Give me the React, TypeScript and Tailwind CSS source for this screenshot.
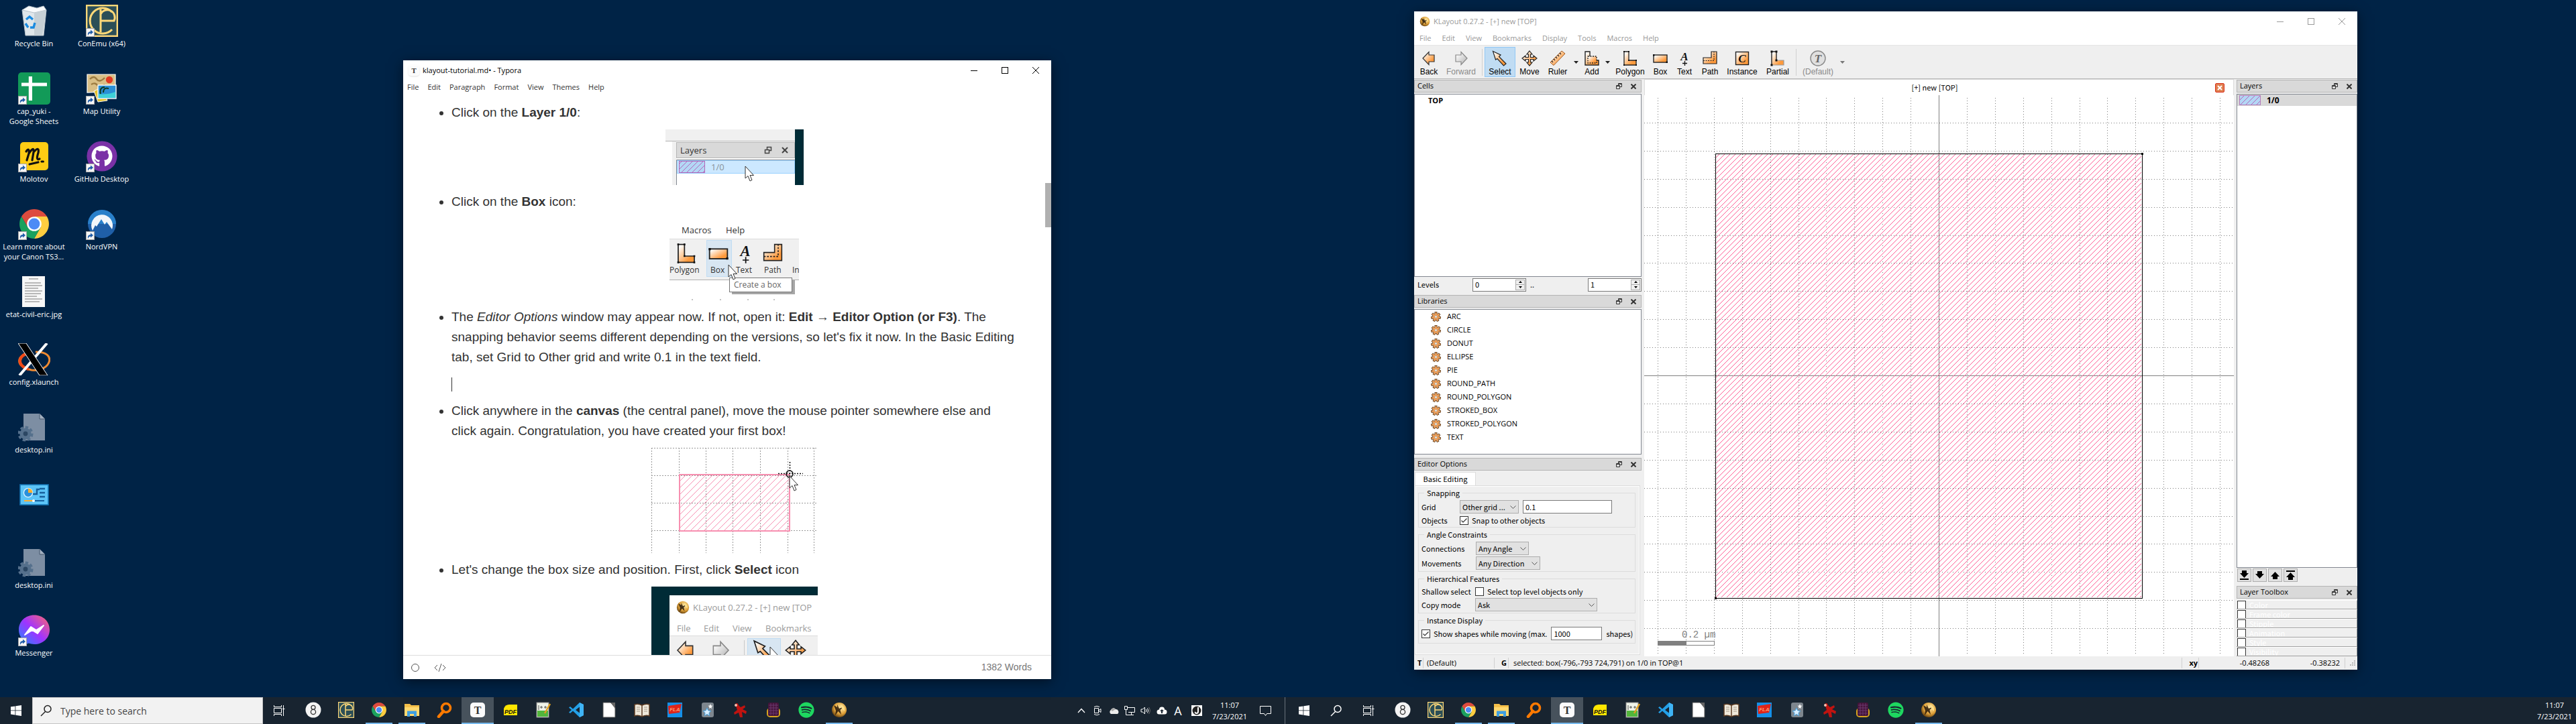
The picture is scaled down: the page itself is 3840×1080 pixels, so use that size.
import type { ReactNode } from 'react';
import { FaGithub, FaSpotify } from 'react-icons/fa';

/* ---------- shared drawing helpers ---------- */

function Glyph({ size = 24, children, className = '' }: { size?: number; children: ReactNode; className?: string }) {
  return (
    <svg width={size} height={size} viewBox="0 0 24 24" className={'shrink-0 ' + className} aria-hidden="true">
      {children}
    </svg>
  );
}

function SharedDefs() {
  return (
    <svg width="0" height="0" className="absolute" aria-hidden="true">
      <defs>
        <linearGradient id="orange" x1="0" y1="0" x2="1" y2="1">
          <stop offset="0.1" stopColor="#ffffff" />
          <stop offset="0.75" stopColor="#ff9a3c" />
        </linearGradient>
        <linearGradient id="grey" x1="0" y1="0" x2="1" y2="1">
          <stop offset="0.1" stopColor="#ffffff" />
          <stop offset="0.9" stopColor="#b8b8b8" />
        </linearGradient>
        <radialGradient id="gold" cx="0.6" cy="0.35" r="0.7">
          <stop offset="0" stopColor="#ffe9a8" />
          <stop offset="0.6" stopColor="#dfa23a" />
          <stop offset="1" stopColor="#5d3a0c" />
        </radialGradient>
        <linearGradient id="messenger" x1="0" y1="1" x2="1" y2="0">
          <stop offset="0" stopColor="#1a8cff" />
          <stop offset="0.5" stopColor="#a033ff" />
          <stop offset="1" stopColor="#ff6a6a" />
        </linearGradient>
        <pattern id="hatch" width="8" height="8" patternUnits="userSpaceOnUse">
          <g fill="#ff5f96" shapeRendering="crispEdges">
            <rect x="0" y="7" width="1" height="1" />
            <rect x="1" y="6" width="1" height="1" />
            <rect x="2" y="5" width="1" height="1" />
            <rect x="3" y="4" width="1" height="1" />
            <rect x="4" y="3" width="1" height="1" />
            <rect x="5" y="2" width="1" height="1" />
            <rect x="6" y="1" width="1" height="1" />
            <rect x="7" y="0" width="1" height="1" />
          </g>
        </pattern>
        <pattern id="swatchHatch" width="8" height="8" patternUnits="userSpaceOnUse">
          <path d="M-1 9L9 -1" stroke="#b565b8" strokeWidth="1" />
        </pattern>
      </defs>
    </svg>
  );
}

/* ---------- application icons ---------- */

const Eight = () => (
  <>
    <circle cx="12" cy="12" r="11.5" fill="#f4f4f4" />
    <circle cx="12" cy="8.3" r="3" fill="none" stroke="#333" strokeWidth="1.3" />
    <circle cx="12" cy="15" r="3.6" fill="none" stroke="#333" strokeWidth="1.3" />
  </>
);
const ConEmu = () => (
  <>
    <rect x="0.6" y="0.6" width="22.8" height="22.8" fill="#2b4e57" stroke="#ffd878" strokeWidth="1.2" />
    <path d="M19.5 5.5A9.5 9.5 0 1 0 19.5 18.5M11 3.5V20.5M11 12H21A5.5 5.5 0 0 0 11 7" fill="none" stroke="#ffd878" strokeWidth="1.5" />
  </>
);
const Chrome = () => (
  <>
    <path d="M2.5 6.5A11 11 0 0 1 21.5 6.5H12L7.2 14.5Z" fill="#dd4b3e" />
    <path d="M21.5 6.5A11 11 0 0 1 12 23L16.8 14.5L12 6.5Z" fill="#ffcd40" />
    <path d="M12 23A11 11 0 0 1 2.5 6.5L7.2 14.5L12 17.5L16.8 14.5Z" fill="#1ba15e" />
    <circle cx="12" cy="12" r="5.4" fill="#fff" />
    <circle cx="12" cy="12" r="4.2" fill="#4c8bf5" />
  </>
);
const Explorer = () => (
  <>
    <path d="M1 3h8l2 2h12v16H1z" fill="#f5c04a" />
    <path d="M1 8h22v13H1z" fill="#ffd970" />
    <path d="M5 22v-8.500h14V22h-4v-4H9v4z" fill="#3f9fe0" />
  </>
);
const Everything = () => (
  <>
    <circle cx="14" cy="9" r="6.500" fill="none" stroke="#ff7a00" strokeWidth="3.600" />
    <path d="M10 14L3 22" stroke="#ff7a00" strokeWidth="4.500" strokeLinecap="round" />
  </>
);
const TyporaIcon = () => (
  <>
    <rect x="1" y="1" width="22" height="22" rx="5" fill="#fbfbfb" />
    <text x="12" y="18" fontSize="16" fontWeight="bold" textAnchor="middle" fill="#333" fontFamily="Liberation Serif, serif">T</text>
  </>
);
const Pdf = () => (
  <>
    <path d="M2 10Q4 4 10 4H22V20H2Z" fill="#ffe600" />
    <text x="12" y="18" fontSize="9" fontWeight="bold" fontStyle="italic" textAnchor="middle" fill="#111" fontFamily="Liberation Sans, sans-serif">PDF</text>
  </>
);
const Notepad = () => (
  <>
    <rect x="2" y="1" width="18" height="22" fill="#eef3ea" stroke="#8a8a8a" />
    <rect x="3" y="13" width="16" height="9" fill="#52b53c" />
    <path d="M5 5v7M7 8h4M9 6v4M13 8h4M15 6v4" stroke="#555" strokeWidth="1" />
    <path d="M22 3L14 17" stroke="#e0a020" strokeWidth="2.500" />
  </>
);
const VsCode = () => (
  <>
    <path d="M17 1L23 4V20L17 23L7 13.500L3 17L1 15.500L5 12L1 8.500L3 7L7 10.500ZM17 7.500L11 12L17 16.500Z" fill="#23a0e8" fillRule="evenodd" />
    <path d="M17 1L23 4V20L17 23Z" fill="#3fb4f5" />
  </>
);
const WhiteDoc = () => (
  <>
    <path d="M3 1h11l7 7v15H3z" fill="#fff" stroke="#555" />
    <path d="M14 1h7v9z" fill="#666" />
  </>
);
const Book = () => (
  <>
    <path d="M1 4Q6 2 12 5Q18 2 23 4V21Q18 19 12 22Q6 19 1 21Z" fill="#efe8da" stroke="#5a3a22" strokeWidth="1.500" />
    <path d="M12 5V22" stroke="#5a3a22" strokeWidth="1.500" />
    <path d="M4 8h5M4 11h5M4 14h5M15 8h5M15 11h5M15 14h5" stroke="#a59a8a" />
  </>
);
const Fla = () => (
  <>
    <rect x="1" y="1" width="22" height="22" fill="#1590e8" />
    <path d="M2 6L22 3L19 16L3 18Z" fill="#e02418" />
    <text x="12" y="14" fontSize="8" fontWeight="bold" fontStyle="italic" textAnchor="middle" fill="#ff9a70" fontFamily="Liberation Sans, sans-serif">FLA</text>
  </>
);
const Stars = () => (
  <>
    <rect x="3" y="1" width="18" height="22" rx="3" fill="#7d868e" />
    <path d="M16 3l1 2.500 2.500.3-2 1.700.6 2.500-2.100-1.300-2.100 1.300.6-2.500-2-1.700 2.500-.3z" fill="#fff" />
    <path d="M11 9l1.800 4 4.200.5-3.100 2.900.8 4.200-3.700-2.100-3.700 2.100.8-4.200L5 13.500l4.200-.5z" fill="#d9efff" stroke="#4aa3e0" />
  </>
);
const RedMan = () => (
  <>
    <path d="M4 3q4-3 5 2l3 3 6-3 1 3-4 3 6 3-1 4-6-3 1 8h-4l-2-7-6 3-1-3 5-4z" fill="#c01310" />
    <circle cx="5" cy="5" r="2" fill="#f4c0b0" />
  </>
);
const Keypad = () => (
  <>
    <rect x="2" y="9" width="20" height="14" rx="5" fill="#d9a520" />
    <rect x="4" y="1" width="16" height="20" rx="2" fill="#45153a" />
    <path d="M5 5h14M5 9h14M5 13h14M5 17h14M8 2v18M12 2v18M16 2v18" stroke="#71407a" strokeWidth="0.800" />
  </>
);
const Spotify = () => <FaSpotify x="0" y="0" size={24} color="#1ed760" />;
const KLayoutIcon = () => (
  <>
    <circle cx="12" cy="12" r="11" fill="url(#gold)" />
    <path d="M4 5L9 8V4L12 10L19 7L13.500 12L15 19L10.500 14L6 20L7 13Z" fill="#1b0e02" opacity="0.8" />
    <path d="M14 4Q21 6 20 14L16 10Z" fill="#ffe08a" />
  </>
);

/* ---------- desktop icons ---------- */

const RecycleBin = () => (
  <>
    <path d="M3 4L21 4L19 23H5.500Z" fill="#dfe6ea" stroke="#b5c0c8" strokeWidth="0.500" />
    <path d="M3 4L8 1L14 2.500L19 1L21 4L12 6Z" fill="#f8fafb" stroke="#b5c0c8" strokeWidth="0.500" />
    <path d="M12 6V23H18L21 4Z" fill="#c6d0d6" />
    <path d="M6 11L8.500 9L11 11M5.500 14L7.500 17M9 17H11.500L12.500 13.500" stroke="#1b8be0" strokeWidth="1.700" fill="none" />
  </>
);
const Sheets = () => (
  <>
    <rect width="24" height="24" rx="2.500" fill="#129a58" />
    <path d="M2.500 9H21.500M9.200 3V21" stroke="#fff" strokeWidth="2.600" />
  </>
);
const Molotov = () => (
  <>
    <rect x="1.500" y="1.500" width="21" height="21" rx="2.500" fill="#ffcc14" />
    <path d="M6 8.500Q8.500 5 8 10L6.500 15M8 10Q12 4 11.500 9L10.500 15M11.500 9Q16 4 15 9.500Q13 15.500 16 14M8.500 18L15 16.500M17.500 16h1.200" stroke="#111" strokeWidth="1.600" fill="none" strokeLinecap="round" />
  </>
);
const XLaunch = () => (
  <>
    <path d="M13 6.500C30 6 24 22 10 20C-4 17 0 8 9 7" fill="none" stroke="#f08a30" strokeWidth="1.500" />
    <path d="M9 7C-1 9 -1 17 8 19.500" fill="none" stroke="#f04a18" strokeWidth="2.200" />
    <path d="M21.500 0L1 24" stroke="#fff" strokeWidth="2" />
    <path d="M0 0H6L22 24H16Z" fill="#000" stroke="#fff" strokeWidth="0.500" />
  </>
);
const IniFile = () => (
  <>
    <path d="M4 2H16L20 6V22H4Z" fill="#7d8ea3" />
    <path d="M16 2V6H20" fill="#a3b0c0" stroke="#44566c" strokeWidth="0.500" />
    <circle cx="5.500" cy="17" r="4.300" fill="#55708c" />
    <circle cx="5.500" cy="17" r="4.900" fill="none" stroke="#55708c" strokeWidth="1.700" strokeDasharray="2.200 1.600" />
    <circle cx="5.500" cy="17" r="1.700" fill="#2c4763" />
  </>
);
const TextPage = () => (
  <>
    <rect x="3" y="0.500" width="17" height="23" fill="#f7f7f7" />
    <path d="M8 2.500h7M5 5.500h12M5 7.500h13M5 9.500h10M5 11.500h13M5 13.500h12M5 15.500h9M5 17.500h13M5 19.500h11" stroke="#a4a4a4" strokeWidth="0.700" />
  </>
);
const ControlPanel = () => (
  <>
    <rect x="1.500" y="4.500" width="21" height="15" fill="#5cc4f7" stroke="#1676b4" strokeWidth="0.800" />
    <circle cx="7.500" cy="10.500" r="3.300" fill="#2a90dc" stroke="#d8f2ff" strokeWidth="0.700" />
    <path d="M7.500 10.500V7.200A3.300 3.300 0 0 1 10.800 10.500Z" fill="#ffb02e" />
    <path d="M11 11.500h3V8h2M16 7.500h4M16 10.500h4M16 13.500h4" stroke="#17609c" fill="none" strokeWidth="1.200" />
    <path d="M4.500 16.500h7" stroke="#ffb02e" /><path d="M11.500 16.500h8" stroke="#17609c" /><circle cx="11.500" cy="16.500" r="1" fill="#fff" />
  </>
);
const MapUtility = () => (
  <>
    <path d="M1 1.500H22V14L1 15Z" fill="#d9bf86" stroke="#fff" strokeWidth="0.600" />
    <path d="M3 5q3-3 5 0t6-1M4 9q3-2 5 1t5-1" stroke="#9c7b41" strokeWidth="1.200" fill="none" />
    <path d="M6 14L9 22L16 21L12 11Z" fill="#e2c02e" stroke="#fff" strokeWidth="0.500" />
    <rect x="9" y="9.500" width="13.500" height="10" fill="#2a8fd6" stroke="#fff" strokeWidth="0.700" />
    <path d="M9.400 16q6 1 12.700-1.500V19H9.400z" fill="#3fd0d8" />
    <path d="M11 16q-1-5 3-5M13 15q0-4 4-3" stroke="#103a20" fill="none" />
    <circle cx="17.500" cy="5.500" r="2.600" fill="#e23a22" />
  </>
);
const GitHubDesktop = () => (
  <>
    <circle cx="12" cy="12" r="11.300" fill="#7a31a6" />
    <FaGithub x="4" y="4" size={16} color="#ffffff" />
  </>
);
const NordVpn = () => (
  <>
    <circle cx="12" cy="12" r="10.500" fill="#1f5fa8" />
    <path d="M1.500 12A10.500 10.500 0 0 1 22.500 12Z" fill="#2e8fd8" opacity="0.7" />
    <path d="M5 17A8 8 0 1 1 19.500 16L15.500 10.500L14 12.500L11.500 8.500L8 14L7 13Z" fill="#f2f6fa" />
  </>
);
const Messenger = () => (
  <>
    <path d="M12 .8C5.500 .8 .5 5.500 .5 11.700C.5 15 2 17.800 4.300 19.700V23.300L7.800 21.800C9.100 22.200 10.500 22.500 12 22.500C18.500 22.500 23.500 17.800 23.500 11.700C23.500 5.500 18.500 .8 12 .8Z" fill="url(#messenger)" />
    <path d="M5 15.500L9.500 9.500L13.500 12L19 8.500L14.500 14.500L10.500 12Z" fill="#fff" stroke="#fff" strokeLinejoin="round" />
  </>
);

type DesktopItem = { label: string; art: ReactNode; shortcut?: boolean };

const firstColumn: DesktopItem[] = [
  { label: 'Recycle Bin', art: <RecycleBin /> },
  { label: 'cap_yuki -\nGoogle Sheets', art: <Sheets />, shortcut: true },
  { label: 'Molotov', art: <Molotov />, shortcut: true },
  { label: 'Learn more about\nyour Canon TS3...', art: <Chrome />, shortcut: true },
  { label: 'etat-civil-eric.jpg', art: <TextPage /> },
  { label: 'config.xlaunch', art: <XLaunch /> },
  { label: 'desktop.ini', art: <IniFile /> },
  { label: '', art: <ControlPanel /> },
  { label: 'desktop.ini', art: <IniFile /> },
  { label: 'Messenger', art: <Messenger />, shortcut: true },
];
const secondColumn: DesktopItem[] = [
  { label: 'ConEmu (x64)', art: <ConEmu />, shortcut: true },
  { label: 'Map Utility', art: <MapUtility />, shortcut: true },
  { label: 'GitHub Desktop', art: <GitHubDesktop />, shortcut: true },
  { label: 'NordVPN', art: <NordVpn />, shortcut: true },
];

function DesktopColumn({ items }: { items: DesktopItem[] }) {
  return (
    <div className="flex w-[101px] flex-col">
      {items.map((item, i) => (
        <button key={i} aria-label={item.label || 'Control Panel'} className="flex h-[101px] flex-col items-center pt-[7px]">
          <span className="relative block">
            <Glyph size={48}>{item.art}</Glyph>
            {item.shortcut && (
              <svg className="absolute bottom-0 left-0" width="13" height="13" viewBox="0 0 13 13" aria-hidden="true">
                <rect x="0.500" y="0.500" width="12" height="12" fill="#f5f5f5" stroke="#a8a8a8" />
                <path d="M3 11Q2 5 7 5V2.500L11 6L7 9.500V7.500Q4.500 7.500 3 11Z" fill="#1f5ca8" />
              </svg>
            )}
          </span>
          <span className="mt-[2px] text-center text-[11px] leading-[15px] whitespace-pre text-white">{item.label}</span>
        </button>
      ))}
    </div>
  );
}

/* ---------- Typora ---------- */

function CursorArrow({ x, y }: { x: number; y: number }) {
  return <path transform={`translate(${x} ${y})`} d="M0 0V18L4 14.500L7 22L10 20.500L7 13.500H12.500Z" fill="#fff" stroke="#333" strokeWidth="1" />;
}

const segoe = 'Open Sans, sans-serif';

function LayersFigure() {
  return (
    <svg width="206" height="83" role="img" aria-label="Layers panel" fontFamily={segoe}>
      <rect width="206" height="83" fill="#fff" />
      <rect width="193" height="17" fill="#f0f0f0" />
      <path d="M0 17.500H193" stroke="#b4b4b4" />
      <rect x="10" y="18" width="6" height="65" fill="#f0f0f0" />
      <rect x="16.500" y="19.500" width="176" height="23" fill="#d9d9d9" stroke="#b5b5b5" />
      <text x="22" y="36" fontSize="13" fill="#333">Layers</text>
      <path d="M148.500 30.500h6v5h-6zM151.500 30v-3.500h6v5h-3" fill="none" stroke="#444" strokeWidth="1.500" />
      <path d="M174 27l8 8M182 27l-8 8" stroke="#444" strokeWidth="2" />
      <path d="M16.500 83V45.500H193" fill="none" stroke="#828790" />
      <rect x="17.500" y="46.500" width="175" height="19" fill="#cce8ff" stroke="#99d1ff" />
      <rect x="20.500" y="47.500" width="38" height="17" fill="#b3d7f5" stroke="#b565b8" />
      <rect x="20" y="47" width="38" height="17" fill="url(#swatchHatch)" />
      <text x="68" y="61" fontSize="13" fill="#8a9299">1/0</text>
      <rect x="193" width="13" height="83" fill="#002b36" />
      <CursorArrow x={119} y={55} />
    </svg>
  );
}

function BoxFigure() {
  return (
    <svg width="193" height="122" role="img" aria-label="Box tool" fontFamily={segoe} fontSize="13" fill="#333">
      <text x="18" y="22">Macros</text>
      <text x="84" y="22">Help</text>
      <rect y="30" width="193" height="61" fill="#f0f0f0" />
      <path d="M0 30.500H193" stroke="#dcdcdc" />
      <path d="M0 91.500H193" stroke="#b0b0b0" />
      <rect x="55.500" y="32.500" width="37" height="54" fill="#d8e6f2" stroke="#c0dcf3" />
      <svg x="9" y="36" width="32" height="32" viewBox="0 0 24 24"><PolygonArt /></svg>
      <svg x="57" y="36" width="32" height="32" viewBox="0 0 24 24"><BoxArt /></svg>
      <svg x="97" y="36" width="32" height="32" viewBox="0 0 24 24"><TextArt /></svg>
      <svg x="138" y="36" width="32" height="32" viewBox="0 0 24 24"><PathArt /></svg>
      <g fontSize="12">
        <text x="0" y="81">Polygon</text>
        <text x="61" y="81">Box</text>
        <text x="99" y="81">Text</text>
        <text x="141" y="81">Path</text>
        <text x="183" y="81">In</text>
      </g>
      <rect x="93" y="92" width="94" height="21" fill="#000" opacity="0.35" />
      <rect x="89.500" y="88.500" width="93" height="21" fill="#fff" stroke="#767676" />
      <text x="96" y="103" fontSize="12" fill="#666">Create a box</text>
      <CursorArrow x={88} y={69} />
      <path d="M34 120v2M76 120v2M117 120v2M156 120v2" stroke="#888" />
    </svg>
  );
}

function CanvasFigure() {
  return (
    <svg width="248" height="157" role="img" aria-label="First box">
      <g stroke="#999" strokeDasharray="2 2">
        {[0, 41, 81, 121, 162, 203, 242].map((x) => <path key={x} d={`M${x + 0.5} 0V157`} />)}
        {[0, 41, 82, 123].map((y) => <path key={y} d={`M0 ${y + 0.5}H248`} />)}
      </g>
      <clipPath id="firstBox"><rect x="42" y="40" width="164" height="84" /></clipPath>
      <g clipPath="url(#firstBox)" stroke="#f78fb2">
        {Array.from({ length: 25 }, (_, i) => <path key={i} d={`M${i * 10 - 42} 124L${42 + i * 10} 40`} />)}
      </g>
      <rect x="42" y="40" width="164" height="84" fill="none" stroke="#f78fb0" strokeWidth="2" />
      <path d="M206.500 21V55M189 38.500H226" stroke="#111" strokeWidth="1.500" strokeDasharray="2 2" />
      <circle cx="206" cy="39" r="5" fill="none" stroke="#111" strokeWidth="1.500" />
      <CursorArrow x={206} y={42} />
    </svg>
  );
}

function SelectFigure() {
  return (
    <svg width="248" height="157" role="img" aria-label="Select tool" fontFamily={segoe} fontSize="13" fill="#9a9a9a">
      <rect width="248" height="157" fill="#002b36" />
      <rect x="27" y="13" width="221" height="144" fill="#fff" />
      <svg x="37" y="21" width="20" height="20" viewBox="0 0 24 24"><KLayoutIcon /></svg>
      <text x="62" y="36">KLayout 0.27.2 - [+] new [TOP</text>
      <text x="38" y="67">File</text>
      <text x="78" y="67">Edit</text>
      <text x="121" y="67">View</text>
      <text x="170" y="67">Bookmarks</text>
      <rect x="27" y="74" width="221" height="83" fill="#f0f0f0" />
      <path d="M27 73.500H248" stroke="#dcdcdc" />
      <rect x="143.500" y="77.500" width="49" height="79" fill="#d8e6f2" stroke="#c0dcf3" />
      <path d="M138.500 80V150" stroke="#c8c8c8" />
      <svg x="35" y="79" width="32" height="32" viewBox="0 0 24 24"><BackArt /></svg>
      <svg x="87" y="79" width="32" height="32" viewBox="0 0 24 24"><ForwardArt /></svg>
      <svg x="151" y="79" width="34" height="34" viewBox="0 0 24 24"><SelectArt /></svg>
      <svg x="199" y="79" width="32" height="32" viewBox="0 0 24 24"><MoveArt /></svg>
      <CursorArrow x={177} y={90} />
    </svg>
  );
}

function Step({ children }: { children: ReactNode }) {
  return <li className="flex flex-col gap-2.5">{children}</li>;
}

function StepText({ children }: { children: ReactNode }) {
  return (
    <p className="relative">
      <span className="absolute top-[13px] -left-[18px] size-[6px] rounded-full bg-[#333]" />
      {children}
    </p>
  );
}

function Figure({ children }: { children: ReactNode }) {
  return <figure className="flex justify-center">{children}</figure>;
}

function WindowButtons({ tone }: { tone: string }) {
  return (
    <div className={'ml-auto flex ' + tone}>
      <button aria-label="Minimize" className="flex h-[30px] w-[46px] items-center justify-center">
        <svg width="10" height="10"><path d="M0 5.500H10" stroke="currentColor" /></svg>
      </button>
      <button aria-label="Maximize" className="flex h-[30px] w-[46px] items-center justify-center">
        <svg width="10" height="10"><rect x="0.500" y="0.500" width="9" height="9" fill="none" stroke="currentColor" /></svg>
      </button>
      <button aria-label="Close" className="flex h-[30px] w-[46px] items-center justify-center">
        <svg width="10" height="10"><path d="M0 0L10 10M10 0L0 10" stroke="currentColor" /></svg>
      </button>
    </div>
  );
}

function TyporaWindow() {
  return (
    <section aria-label="Typora" className="absolute top-[90px] left-[601px] flex h-[923px] w-[966px] flex-col bg-white shadow-[0_4px_18px_rgba(0,0,0,0.5)]">
      <header className="flex h-[30px] items-center pl-2 text-[12px] text-black">
        <Glyph size={16} className="rounded-sm shadow"><TyporaIcon /></Glyph>
        <span className="ml-[5px] text-[11px]">klayout-tutorial.md• - Typora</span>
        <WindowButtons tone="text-black" />
      </header>
      <nav className="flex h-5 items-center gap-[13px] pl-1.5 text-[11px] text-[#333]">
        {['File', 'Edit', 'Paragraph', 'Format', 'View', 'Themes', 'Help'].map((m) => <button key={m}>{m}</button>)}
      </nav>
      <div className="flex min-h-0 flex-1">
        <article className="min-w-0 flex-1 overflow-hidden pt-[13px] pr-[42px] pl-[72px] font-['Liberation_Sans',Arial,sans-serif] text-[19px] leading-[30px] text-[#333]">
          <ul className="flex flex-col gap-2.5">
            <Step>
              <StepText>Click on the <b>Layer 1/0</b>:</StepText>
              <Figure><LayersFigure /></Figure>
            </Step>
            <Step>
              <StepText>Click on the <b>Box</b> icon:</StepText>
              <Figure><BoxFigure /></Figure>
            </Step>
            <Step>
              <StepText>
                The <i>Editor Options</i> window may appear now. If not, open it: <b>Edit → Editor Option (or F3)</b>. The snapping behavior seems
                different depending on the versions, so let's fix it now. In the Basic Editing tab, set Grid to Other grid and write 0.1 in the text field.
              </StepText>
              <p className="flex h-[30px] items-center"><span className="h-[21px] w-px bg-[#333]" /></p>
            </Step>
            <Step>
              <StepText>
                Click anywhere in the <b>canvas</b> (the central panel), move the mouse pointer somewhere else and click again. Congratulation, you
                have created your first box!
              </StepText>
              <Figure><CanvasFigure /></Figure>
            </Step>
            <Step>
              <StepText>Let's change the box size and position. First, click <b>Select</b> icon</StepText>
              <Figure><SelectFigure /></Figure>
            </Step>
          </ul>
        </article>
        <div className="w-[9px] pt-[133px]"><div className="h-[66px] bg-[#b0b0b0]" /></div>
      </div>
      <footer className="flex h-9 items-center border-t border-[#ddd] pr-[29px] pl-3 font-['Liberation_Sans',Arial,sans-serif] text-[14px] text-[#777]">
        <button aria-label="Toggle sidebar" className="size-3 rounded-full border border-[#555]" />
        <button aria-label="Source mode" className="ml-[22px]">
          <svg width="18" height="12" fill="none" stroke="#555"><path d="M5 2L1 6L5 10M13 2L17 6L13 10M11 0L7 12" /></svg>
        </button>
        <span className="ml-auto">1382 Words</span>
      </footer>
    </section>
  );
}

/* ---------- KLayout toolbar art ---------- */

const BackArt = () => <path d="M3 12L12 2.500V7H20V17H12V21.500Z" fill="url(#orange)" stroke="#333" strokeWidth="1.200" />;
const ForwardArt = () => <path d="M21 12L12 2.500V7H4V17H12V21.500Z" fill="url(#grey)" stroke="#888" strokeWidth="1.200" />;
const SelectArt = () => <path d="M1.500 1.500L13 7L10.500 9.500L21 20L17.500 23L8 12.500L5.500 14Z" fill="url(#orange)" stroke="#222" strokeWidth="1.200" />;
const MoveArt = () => (
  <path d="M12 1L16 6H13.500V10.500H18V8L23 12L18 16V13.500H13.500V18H16L12 23L8 18H10.500V13.500H6V16L1 12L6 8V10.500H10.500V6H8Z" fill="url(#orange)" stroke="#222" strokeWidth="1.200" />
);
const RulerArt = () => (
  <>
    <path d="M1 18L18 1L23 5L6 22.500Z" fill="url(#orange)" stroke="#a05a20" strokeWidth="1" />
    <path d="M3 16l2 2M6 13l2 2M9 10l2 2M12 7l2 2M15 4l2 2" stroke="#222" strokeWidth="1.200" />
  </>
);
const AddArt = () => (
  <>
    <path d="M2 2H9V15H22V22H2Z" fill="url(#orange)" stroke="#222" strokeWidth="1.400" />
    <rect x="6" y="9" width="13" height="10" fill="url(#orange)" stroke="#222" strokeWidth="1.300" strokeDasharray="2 1.500" />
  </>
);
const PolygonArt = () => (
  <>
    <path d="M3 2H10V15H21V22H3Z" fill="url(#orange)" stroke="#222" strokeWidth="1.300" />
    <path d="M2 1h2v2H2zM9 1h2v2H9zM20 14h2v2h-2zM20 21h2v2h-2zM2 21h2v2H2zM9 14h2v2H9z" fill="#111" />
  </>
);
const BoxArt = () => (
  <>
    <rect x="2" y="7" width="20" height="11" fill="url(#orange)" stroke="#222" strokeWidth="1.400" />
    <path d="M1 6h2.500v2.500H1zM20.500 16.500H23V19h-2.500z" fill="#111" />
  </>
);
const TextArt = () => (
  <>
    <text x="12" y="15" fontSize="17" fontWeight="bold" fontStyle="italic" textAnchor="middle" fill="#111" fontFamily="Liberation Serif, serif">A</text>
    <path d="M12.500 16V23M9 19.500H16" stroke="#111" strokeWidth="1.300" />
  </>
);
const PathArt = () => (
  <>
    <path d="M2 11H14V2H22V20H2Z" fill="url(#orange)" stroke="#222" strokeWidth="1.200" />
    <path d="M2 15.500H18V2" fill="none" stroke="#222" strokeWidth="1.200" strokeDasharray="2 1.500" />
  </>
);
const InstanceArt = () => (
  <>
    <rect x="2.500" y="2.500" width="19" height="19" fill="url(#orange)" stroke="#222" strokeWidth="1.400" />
    <text x="12" y="18" fontSize="17" fontWeight="bold" fontStyle="italic" textAnchor="middle" fill="#111" fontFamily="Liberation Serif, serif">C</text>
  </>
);
const PartialArt = () => (
  <>
    <path d="M3 2H10V15H21V22H3Z" fill="url(#orange)" />
    <path d="M10 15H21V22H3" fill="none" stroke="#999" strokeWidth="1.200" />
    <path d="M3 22V2H10V15" fill="none" stroke="#222" strokeWidth="1.400" />
    <path d="M1.500 .5h3v3h-3zM8.500 .5h3v3h-3zM8.500 13.500h3v3h-3zM1.500 20.500h3v3h-3z" fill="#111" />
  </>
);
const DefaultArt = () => (
  <>
    <circle cx="12" cy="12" r="11" fill="#e0e0e0" stroke="#888" strokeWidth="1.400" />
    <text x="12" y="18" fontSize="17" fontWeight="bold" fontStyle="italic" textAnchor="middle" fill="#666" fontFamily="Liberation Serif, serif">T</text>
  </>
);

type Tool = { label: string; art: ReactNode; width: string; muted?: boolean; active?: boolean; divider?: boolean; menu?: string };

const tools: Tool[] = [
  { label: 'Back', art: <BackArt />, width: 'w-[42px]' },
  { label: 'Forward', art: <ForwardArt />, width: 'w-[54px]', muted: true, divider: true },
  { label: 'Select', art: <SelectArt />, width: 'w-[46px]', active: true },
  { label: 'Move', art: <MoveArt />, width: 'w-[42px]' },
  { label: 'Ruler', art: <RulerArt />, width: 'w-[42px]', menu: 'w-3' },
  { label: 'Add', art: <AddArt />, width: 'w-[36px]', menu: 'w-2.5' },
  { label: 'Polygon', art: <PolygonArt />, width: 'w-[58px]' },
  { label: 'Box', art: <BoxArt />, width: 'w-[32px]' },
  { label: 'Text', art: <TextArt />, width: 'w-[40px]' },
  { label: 'Path', art: <PathArt />, width: 'w-[36px]' },
  { label: 'Instance', art: <InstanceArt />, width: 'w-[60px]' },
  { label: 'Partial', art: <PartialArt />, width: 'w-[46px]', divider: true },
  { label: '(Default)', art: <DefaultArt />, width: 'w-[58px]', muted: true, menu: 'w-3.5' },
];

function Toolbar() {
  return (
    <div className="flex h-[50px] items-start border-b border-[#b4b4b4] bg-[#efefef] pt-[2px] pl-px font-['Liberation_Sans',Arial,sans-serif] text-[12px] leading-[14px]">
      {tools.map((t) => (
        <div key={t.label} className="flex items-center">
          <button
            className={
              'flex h-[45px] flex-col items-center border pt-1 ' + t.width +
              (t.active ? ' border-[#90c8f6] bg-[#c0dcf3]' : ' border-transparent') + (t.muted ? ' text-[#8a8a8a]' : ' text-black')
            }
          >
            <Glyph size={24}>{t.art}</Glyph>
            <span className="mt-px">{t.label}</span>
          </button>
          {t.menu && (
            <button aria-label={t.label + ' menu'} className={'flex justify-center ' + t.menu}>
              <svg width="7" height="4"><path d="M0 0H7L3.500 4Z" fill={t.muted ? '#777' : '#222'} /></svg>
            </button>
          )}
          {t.divider && <span className="mr-[3px] ml-1 h-10 w-px bg-[#d0d0d0]" />}
        </div>
      ))}
    </div>
  );
}

/* ---------- KLayout panels ---------- */

function DockHeader({ title }: { title: string }) {
  return (
    <div className="flex h-[19px] shrink-0 items-center border border-[#b4b4b4] bg-[#d9d9d9] pr-[7px] pl-1 text-[11px] text-black">
      <h2>{title}</h2>
      <button aria-label={'Float ' + title} className="ml-auto">
        <svg width="9" height="9" fill="none" stroke="#333"><path d="M0.500 3.500h5v5h-5zM3.500 3V0.500h5v5H6M1 4.500h4M4 1.500h4" /></svg>
      </button>
      <button aria-label={'Close ' + title} className="ml-[13px]">
        <svg width="8" height="8" stroke="#333" strokeWidth="2"><path d="M0.500 0.500L7.500 7.500M7.500 0.500L0.500 7.500" /></svg>
      </button>
    </div>
  );
}

function Spin({ label, value }: { label: string; value: string }) {
  return (
    <span className="flex h-5 w-20 items-center border border-[#7a7a7a] bg-white pr-px">
      <input aria-label={label} defaultValue={value} className="w-0 flex-1 pl-[3px] outline-none" />
      <span className="flex h-4 w-[14px] flex-col border border-[#adadad] bg-[#efefef]">
        <button aria-label={label + ' up'} className="flex flex-1 items-center justify-center border-b border-[#adadad]">
          <svg width="5" height="3"><path d="M0 3H5L2.500 0Z" /></svg>
        </button>
        <button aria-label={label + ' down'} className="flex flex-1 items-center justify-center">
          <svg width="5" height="3"><path d="M0 0H5L2.500 3Z" /></svg>
        </button>
      </span>
    </span>
  );
}

function Picker({ id, value, width }: { id: string; value: string; width: string }) {
  return (
    <span className={'grid items-center ' + width}>
      <select id={id} className="col-start-1 row-start-1 h-5 w-full appearance-none border border-[#adadad] bg-[#e1e1e1] pl-[3px] outline-none">
        <option>{value}</option>
      </select>
      <svg className="pointer-events-none col-start-1 row-start-1 mr-1 justify-self-end" width="9" height="5" fill="none" stroke="#555"><path d="M0.500 0.500L4.500 4.500L8.500 0.500" /></svg>
    </span>
  );
}

function Tick({ label, checked, id }: { label: string; checked?: boolean; id: string }) {
  return (
    <label htmlFor={id} className="flex items-center gap-[5px] whitespace-nowrap">
      <span className="grid items-center justify-items-center">
        <input id={id} type="checkbox" defaultChecked={checked} className="peer col-start-1 row-start-1 size-[13px] appearance-none border border-[#333] bg-white" />
        <svg className="pointer-events-none invisible col-start-1 row-start-1 peer-checked:visible" width="9" height="7" fill="none" stroke="#333" strokeWidth="1.200"><path d="M0.500 3.500L3 6L8.500 0.500" /></svg>
      </span>
      {label}
    </label>
  );
}

function Group({ title, children, className = '' }: { title: string; children: ReactNode; className?: string }) {
  return (
    <fieldset className="min-w-0 border border-[#dcdcdc] pl-1">
      <legend className="ml-1 px-1 leading-[12px]">{title}</legend>
      <div className={'flex flex-col ' + className}>{children}</div>
    </fieldset>
  );
}

const gearTeeth = [0, 51, 103, 154, 206, 257, 309];

function Gear() {
  return (
    <Glyph size={15}>
      <g fill="#eda05c" stroke="#5a3818" strokeWidth="1.300">
        <circle cx="12" cy="12" r="7.500" />
        {gearTeeth.map((a) => <rect key={a} x="9.500" y="0.700" width="5" height="6" transform={`rotate(${a} 12 12)`} />)}
      </g>
      <circle cx="12" cy="12" r="7.200" fill="#eda05c" />
      <circle cx="12" cy="12" r="2.800" fill="#e8f0f0" stroke="#a5886c" />
    </Glyph>
  );
}

const libraries = ['ARC', 'CIRCLE', 'DONUT', 'ELLIPSE', 'PIE', 'ROUND_PATH', 'ROUND_POLYGON', 'STROKED_BOX', 'STROKED_POLYGON', 'TEXT'];

function LeftDock() {
  return (
    <aside className="flex w-[339px] shrink-0 flex-col pt-px">
      <DockHeader title="Cells" />
      <div className="mt-0.5 flex-1 border border-[#828790] bg-white pl-5 text-[11px] leading-[18px] font-bold">TOP</div>
      <div className="flex h-[22px] items-center pt-px pl-[5px] font-['Noto_Sans_CJK_JP',sans-serif] text-[11px]">
        <span className="w-[82px]">Levels</span>
        <Spin label="Lowest level" value="0" />
        <span className="ml-1.5 flex-1">..</span>
        <Spin label="Highest level" value="1" />
      </div>
      <div className="mt-[5px]"><DockHeader title="Libraries" /></div>
      <ul className="mt-0.5 h-[217px] border border-[#828790] bg-white pl-6 text-[11px]">
        {libraries.map((l) => (
          <li key={l} className="flex h-5 items-center gap-[9px]"><Gear />{l}</li>
        ))}
      </ul>
      <div className="mt-[5px]"><DockHeader title="Editor Options" /></div>
      <div className="mt-0.5 mr-[2px] mb-0.5 ml-px font-['Noto_Sans_CJK_JP',sans-serif] text-[11px]">
        <button role="tab" aria-selected="true" className="block h-5 w-[91px] border border-b-0 border-[#dcdcdc] bg-white">Basic Editing</button>
        <div className="flex h-[253px] flex-col gap-1 border border-[#dcdcdc] pt-1 pr-1.5 pl-1 outline-1 -outline-offset-2 outline-white">
          <Group title="Snapping" className="pt-[5px]">
            <div className="flex h-5 items-center">
              <label htmlFor="grid" className="w-[57px]">Grid</label>
              <Picker id="grid" value="Other grid ..." width="w-[88px]" />
              <input aria-label="Grid value" defaultValue="0.1" className="ml-1.5 h-5 w-[133px] border border-[#7a7a7a] bg-white pl-[3px]" />
            </div>
            <div className="flex h-5 items-center"><span className="w-[57px]">Objects</span><Tick id="snap" label="Snap to other objects" checked /></div>
          </Group>
          <Group title="Angle Constraints" className="gap-0.5 pt-[5px] pb-0.5">
            <div className="flex h-5 items-center"><label htmlFor="conn" className="w-[81px]">Connections</label><Picker id="conn" value="Any Angle" width="w-[79px]" /></div>
            <div className="flex h-5 items-center"><label htmlFor="mov" className="w-[81px]">Movements</label><Picker id="mov" value="Any Direction" width="w-24" /></div>
          </Group>
          <Group title="Hierarchical Features" className="pt-[3px] pb-0.5">
            <div className="flex h-5 items-center"><span className="w-20">Shallow select</span><Tick id="shallow" label="Select top level objects only" /></div>
            <div className="flex h-5 items-center"><label htmlFor="copy" className="w-20">Copy mode</label><Picker id="copy" value="Ask" width="w-[182px]" /></div>
          </Group>
          <Group title="Instance Display" className="pt-1 pb-1">
            <div className="flex h-5 items-center">
              <Tick id="shapes" label="Show shapes while moving (max." checked />
              <input aria-label="Maximum shapes" defaultValue="1000" className="ml-1.5 h-5 w-[76px] border border-[#7a7a7a] bg-white pl-[3px]" />
              <span className="ml-1.5">shapes)</span>
            </div>
          </Group>
        </div>
      </div>
    </aside>
  );
}

const gridPitch = 41.9;
const axisX = 439;
const axisY = 418;

function LayoutCanvas() {
  const columns = Array.from({ length: 21 }, (_, i) => i - 10).filter((k) => k !== 0);
  const rows = Array.from({ length: 19 }, (_, i) => i - 9).filter((k) => k !== 0);
  return (
    <svg className="h-full w-full" role="img" aria-label="Layout canvas" shapeRendering="crispEdges">
      <g stroke="#7c7c7c" strokeDasharray="1 3">
        {columns.map((k) => <path key={k} d={`M${Math.round(axisX + k * gridPitch) + 0.5} 4V833`} />)}
        {rows.map((k) => <path key={k} d={`M0 ${Math.round(axisY + k * gridPitch) + 0.5}H2000`} />)}
      </g>
      <path d="M439.500 0V837M0 418.500H2000" stroke="#808080" />
      <rect x="107" y="88" width="634" height="661" fill="url(#hatch)" />
      <rect x="106.500" y="87.500" width="636" height="663" fill="none" stroke="#000" />
      <path d="M105 749h3v3h-3zM741 86h3v3h-3z" fill="#000" />
      <text x="56" y="809" fontSize="14" fill="#808080" fontFamily="Liberation Mono, monospace">0.2 µm</text>
      <rect x="20.500" y="814.500" width="84" height="6" fill="#fff" stroke="#808080" />
      <rect x="20" y="814" width="43" height="7" fill="#808080" />
    </svg>
  );
}

const orderArrows = [
  { label: 'Move to bottom', d: 'M4 1H11V5H14L7.500 12L1 5H4ZM1 13H14V15H1Z' },
  { label: 'Move down', d: 'M4 2H11V6H14L7.500 13L1 6H4Z' },
  { label: 'Move up', d: 'M4 14H11V10H14L7.500 3L1 10H4Z' },
  { label: 'Move to top', d: 'M1 1H14V3H1ZM4 15H11V11H14L7.500 4L1 11H4Z' },
];

function RightDock() {
  return (
    <aside className="flex w-[180px] shrink-0 flex-col pt-px">
      <DockHeader title="Layers" />
      <div className="mt-0.5 flex-1 border border-[#828790] bg-white">
        <div className="flex h-[17px] items-center gap-[9px] bg-[#d9d9d9] pl-[3px] text-[12px] font-bold">
          <svg width="32" height="15">
            <rect x="0.500" y="0.500" width="31" height="14" fill="#b3d7f5" />
            <rect x="0" y="0" width="32" height="15" fill="url(#swatchHatch)" />
            <rect x="0.500" y="0.500" width="31" height="14" fill="none" stroke="#b57ab8" />
          </svg>
          1/0
        </div>
      </div>
      <div className="mt-px flex h-5 gap-0.5 pl-px">
        {orderArrows.map((a) => (
          <button key={a.label} aria-label={a.label} className="flex w-[21px] items-center justify-center border border-[#adadad] bg-[#e1e1e1]">
            <svg width="15" height="16"><path d={a.d} /></svg>
          </button>
        ))}
      </div>
      <div className="mt-1.5"><DockHeader title="Layer Toolbox" /></div>
      <div className="mt-0.5 font-['Noto_Sans_CJK_JP',sans-serif] text-[11px] leading-[12px] text-white">
        {['Color', 'Frame color', 'Stipple', 'Animation', 'Style', 'Visibility'].map((t) => (
          <label key={t} className="flex h-3.5 items-center gap-[5px] overflow-hidden border-t border-r border-b border-t-white border-r-[#a0a0a0] border-b-[#a0a0a0] pl-px">
            <input type="checkbox" className="size-[13px] shrink-0 appearance-none border border-b-0 border-[#333] bg-white" />
            {t}
          </label>
        ))}
      </div>
    </aside>
  );
}

function KLayoutWindow() {
  return (
    <section aria-label="KLayout" className="absolute top-[17px] left-[2108px] flex h-[982px] w-[1406px] flex-col bg-[#efefef] text-black shadow-[0_4px_18px_rgba(0,0,0,0.5)]">
      <header className="flex h-[30px] items-center bg-white pl-2 text-[11px] text-[#999]">
        <Glyph size={16}><KLayoutIcon /></Glyph>
        <span className="ml-[5px]">KLayout 0.27.2 - [+] new [TOP]</span>
        <WindowButtons tone="text-[#999]" />
      </header>
      <nav className="flex h-[21px] items-center gap-4 border-b border-[#e4e4e4] bg-white pl-2 text-[11px] text-[#999]">
        {['File', 'Edit', 'View', 'Bookmarks', 'Display', 'Tools', 'Macros', 'Help'].map((m) => <button key={m}>{m}</button>)}
      </nav>
      <Toolbar />
      <div className="flex min-h-0 flex-1 gap-1">
        <LeftDock />
        <main className="flex min-w-0 flex-1 flex-col bg-white">
          <div className="grid h-6 grid-cols-[1fr_auto_1fr] items-center border-x border-t border-[#dcdcdc] pr-[13px] font-['Noto_Sans_CJK_JP',sans-serif] text-[11px]">
            <span className="col-start-2">[+] new [TOP]</span>
            <button aria-label="Close view" className="flex size-3.5 items-center justify-center justify-self-end rounded-[2px] border border-[#d8301c] bg-[#e08050]">
              <svg width="8" height="8" stroke="#fff" strokeWidth="2"><path d="M1 1L7 7M7 1L1 7" /></svg>
            </button>
          </div>
          <div className="min-h-0 flex-1"><LayoutCanvas /></div>
        </main>
        <RightDock />
      </div>
      <footer className="flex h-5 items-center pr-[3px] text-[11px] leading-[16px]">
        <b className="w-[14px] border-r border-[#d0d0d0] pl-[5px]">T</b>
        <span className="w-[106px] border-r border-[#d0d0d0] pl-[5px]">(Default)</span>
        <b className="w-[21px] border-r border-[#d0d0d0] pl-[10px]">G</b>
        <span className="flex-1 border-r border-[#d0d0d0] pl-[7px]">selected: box(-796,-793 724,791) on 1/0 in TOP@1</span>
        <b className="w-[25px] border-r border-[#d0d0d0] pr-px text-right">xy</b>
        <span className="w-[105px] text-right">-0.48268</span>
        <span className="w-[113px] border-r border-[#d0d0d0] pr-[7px] text-right">-0.38232</span>
        <svg className="ml-[7px]" width="8" height="8" fill="#b8b8b8"><path d="M6 0h2v2H6zM3 3h2v2H3zM6 3h2v2H6zM0 6h2v2H0zM3 6h2v2H3zM6 6h2v2H6z" /></svg>
      </footer>
    </section>
  );
}

/* ---------- taskbar ---------- */

const apps: { name: string; art: ReactNode; running?: boolean; active?: boolean }[] = [
  { name: 'Eight', art: <Eight /> },
  { name: 'ConEmu', art: <ConEmu /> },
  { name: 'Chrome', art: <Chrome />, running: true },
  { name: 'File Explorer', art: <Explorer />, running: true },
  { name: 'Everything', art: <Everything /> },
  { name: 'Typora', art: <TyporaIcon />, active: true },
  { name: 'PDF', art: <Pdf /> },
  { name: 'Notepad++', art: <Notepad /> },
  { name: 'VS Code', art: <VsCode /> },
  { name: 'LibreOffice', art: <WhiteDoc /> },
  { name: 'Dictionary', art: <Book /> },
  { name: 'FLA', art: <Fla /> },
  { name: 'Anki', art: <Stars /> },
  { name: 'Red figure', art: <RedMan /> },
  { name: 'Keypad', art: <Keypad /> },
  { name: 'Spotify', art: <Spotify /> },
  { name: 'KLayout', art: <KLayoutIcon />, running: true },
];

function SearchIcon({ color }: { color: string }) {
  return <svg width="18" height="18" fill="none" stroke={color} strokeWidth="1.500"><circle cx="11" cy="6.500" r="5" /><path d="M7.500 10.500L1 17" /></svg>;
}

function TaskbarStart({ search }: { search: ReactNode }) {
  return (
    <>
      <button aria-label="Start" className="flex w-12 items-center justify-center">
        <svg width="16" height="16" fill="#fff"><path d="M0 2.300L6.500 1.400V7.500H0ZM7.300 1.300L16 0V7.500H7.300ZM0 8.300H6.500V14.500L0 13.600ZM7.300 8.300H16V16L7.300 14.700Z" /></svg>
      </button>
      {search}
      <button aria-label="Task view" className="flex w-12 items-center justify-center">
        <svg width="17" height="16" fill="none" stroke="#fff"><path d="M0.500 0V2.500H11.500V0M0.500 16V13.500H11.500V16M0.500 4.500H11.500V11.500H0.500ZM14.500 0V16M13 5.500H16.500" /></svg>
      </button>
    </>
  );
}

function TaskbarApps() {
  return (
    <div className="ml-[3px] flex gap-px">
      {apps.map((a) => (
        <button key={a.name} aria-label={a.name} className={'flex w-12 flex-col items-center ' + (a.active ? 'bg-[#47525c]' : '')}>
          <span className="flex flex-1 items-center"><Glyph size={24}>{a.art}</Glyph></span>
          <span className={'h-0.5 ' + (a.active ? 'w-full bg-[#76b9ed]' : a.running ? 'w-10 bg-[#76b9ed]' : 'w-10')} />
        </button>
      ))}
    </div>
  );
}

function Clock() {
  return (
    <div className="flex w-[68px] flex-col items-center justify-center text-[11px] leading-[17px] text-white">
      <span>11:07</span>
      <span>7/23/2021</span>
    </div>
  );
}

function Tray() {
  return (
    <div className="ml-auto flex text-white">
      <div className="flex items-center gap-2">
        <svg width="16" height="16" fill="none" stroke="#fff" strokeWidth="1.300"><path d="M3 11L8 5.500L13 11" /></svg>
        <svg width="16" height="16" fill="none" stroke="#fff"><path d="M3 2.500Q7 0 11 2.500M3 13.500Q7 16 11 13.500M3.500 4.500h6v7h-6zM10 7.500l3-2v5l-3-2" /></svg>
        <svg width="16" height="16"><path d="M4 13a3.500 3.500 0 0 1 0-6a4 4 0 0 1 7-1a4 4 0 0 1 3 7z" fill="#ececec" /><path d="M4 7a4 4 0 0 1 7-1l-5 3z" fill="#aaa" /></svg>
        <svg width="16" height="16" fill="none" stroke="#fff"><path d="M4.500 3.500H15.500V10.500H6M10.500 11V14.500M7 14.500H14M0.500 1.500H4.500V6.500H0.500ZM2.500 7V14.500H7" /></svg>
        <svg width="16" height="16" fill="none" stroke="#fff"><path d="M1 6H3.500L6.500 3V13L3.500 10H1ZM8.500 6Q10 8 8.500 10M10.500 4.500Q13 8 10.500 11.500" /><path d="M12.500 3Q16 8 12.500 13" stroke="#777" /></svg>
        <svg width="16" height="16"><path d="M4 13.500a3.500 3.500 0 0 1 0-7a4 4 0 0 1 8 0a3.500 3.500 0 0 1 0 7z" fill="#fff" /><path d="M8 6L5 9H7V12H9V9H11Z" fill="#182430" /></svg>
        <span className="w-4 text-center font-['Open_Sans',sans-serif] text-[18px] leading-none">A</span>
      </div>
      <div className="ml-3 flex items-center">
        <svg width="16" height="16"><rect width="16" height="16" fill="#fff" /><circle cx="8" cy="8" r="6.500" fill="#222" /><path d="M10 3V9.500Q10 12 7.500 12T6 10" fill="none" stroke="#fff" strokeWidth="2" /></svg>
      </div>
      <div className="ml-[7px] flex"><Clock /></div>
      <button aria-label="Notifications" className="ml-[11px] flex items-center">
        <svg width="17" height="17" fill="none" stroke="#fff"><path d="M0.500 1.500H16.500V12.500H10.500L8.500 15.500L6.500 12.500H0.500Z" /></svg>
      </button>
      <span className="mr-1 ml-5 w-px bg-[#6a737c]" />
    </div>
  );
}

function Taskbar() {
  return (
    <footer className="flex h-10 bg-[#182430]">
      <div className="flex flex-1">
        <TaskbarStart
          search={
            <label className="flex w-[344px] items-center gap-3 border border-[#c4c4c4] bg-[#f2f2f2] pl-[11px]">
              <SearchIcon color="#222" />
              <input aria-label="Search" placeholder="Type here to search" className="w-0 flex-1 text-[14px] outline-none placeholder:text-[#444]" />
            </label>
          }
        />
        <TaskbarApps />
        <Tray />
      </div>
      <div className="flex flex-1">
        <TaskbarStart search={<button aria-label="Search" className="flex w-12 items-center justify-center"><SearchIcon color="#fff" /></button>} />
        <TaskbarApps />
        <div className="mr-[-2px] ml-auto flex"><Clock /></div>
      </div>
    </footer>
  );
}

export default function App() {
  return (
    <div className="relative flex min-h-screen flex-col overflow-hidden bg-[#002346] font-['Open_Sans',sans-serif]">
      <SharedDefs />
      <div className="flex flex-1">
        <DesktopColumn items={firstColumn} />
        <DesktopColumn items={secondColumn} />
      </div>
      <TyporaWindow />
      <KLayoutWindow />
      <Taskbar />
    </div>
  );
}
